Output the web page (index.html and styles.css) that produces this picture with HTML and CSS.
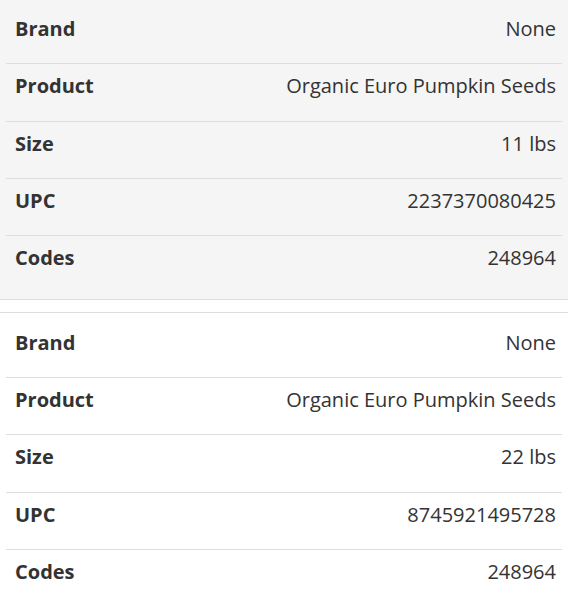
FILE: index.html
```html
<!DOCTYPE html>
<html lang="en">
<head>
  <meta charset="UTF-8" />
  <meta name="viewport" content="width=device-width, initial-scale=1.0" />
  <title>Product details</title>
  <link rel="stylesheet" href="styles.css">
</head>
<body>
  <section class="spec spec-muted">
    <div class="spec-row"><span class="spec-key">Brand</span><span class="spec-val">None</span></div>
    <div class="spec-row"><span class="spec-key">Product</span><span class="spec-val">Organic Euro Pumpkin Seeds</span></div>
    <div class="spec-row"><span class="spec-key">Size</span><span class="spec-val">11 lbs</span></div>
    <div class="spec-row"><span class="spec-key">UPC</span><span class="spec-val">2237370080425</span></div>
    <div class="spec-row"><span class="spec-key">Codes</span><span class="spec-val">248964</span></div>
  </section>

  <section class="spec">
    <div class="spec-row"><span class="spec-key">Brand</span><span class="spec-val">None</span></div>
    <div class="spec-row"><span class="spec-key">Product</span><span class="spec-val">Organic Euro Pumpkin Seeds</span></div>
    <div class="spec-row"><span class="spec-key">Size</span><span class="spec-val">22 lbs</span></div>
    <div class="spec-row"><span class="spec-key">UPC</span><span class="spec-val">8745921495728</span></div>
    <div class="spec-row"><span class="spec-key">Codes</span><span class="spec-val">248964</span></div>
  </section>
</body>
</html>
```

FILE: styles.css
```css
* { margin: 0; padding: 0; box-sizing: border-box; }

body {
  background: #fff;
  font-family: 'Open Sans', sans-serif;
  color: #333;
}

.spec {
  padding: 8px 6px 6px;
  background: #fff;
  border-top: 1px solid #ddd;
}

.spec-muted {
  padding-top: 7px;
  background: #f5f5f5;
  border-top: none;
  border-bottom: 1px solid #ddd;
  margin-bottom: 12px;
}

.spec-row {
  display: flex;
  justify-content: space-between;
  align-items: baseline;
  padding: 8px 6px 20px 9px;
  font-size: 20px;
  line-height: 28.33px;
}

.spec-row + .spec-row {
  border-top: 1px solid #ddd;
}

.spec-key { font-weight: 700; }
.spec-val { font-weight: 400; text-align: right; }
```
